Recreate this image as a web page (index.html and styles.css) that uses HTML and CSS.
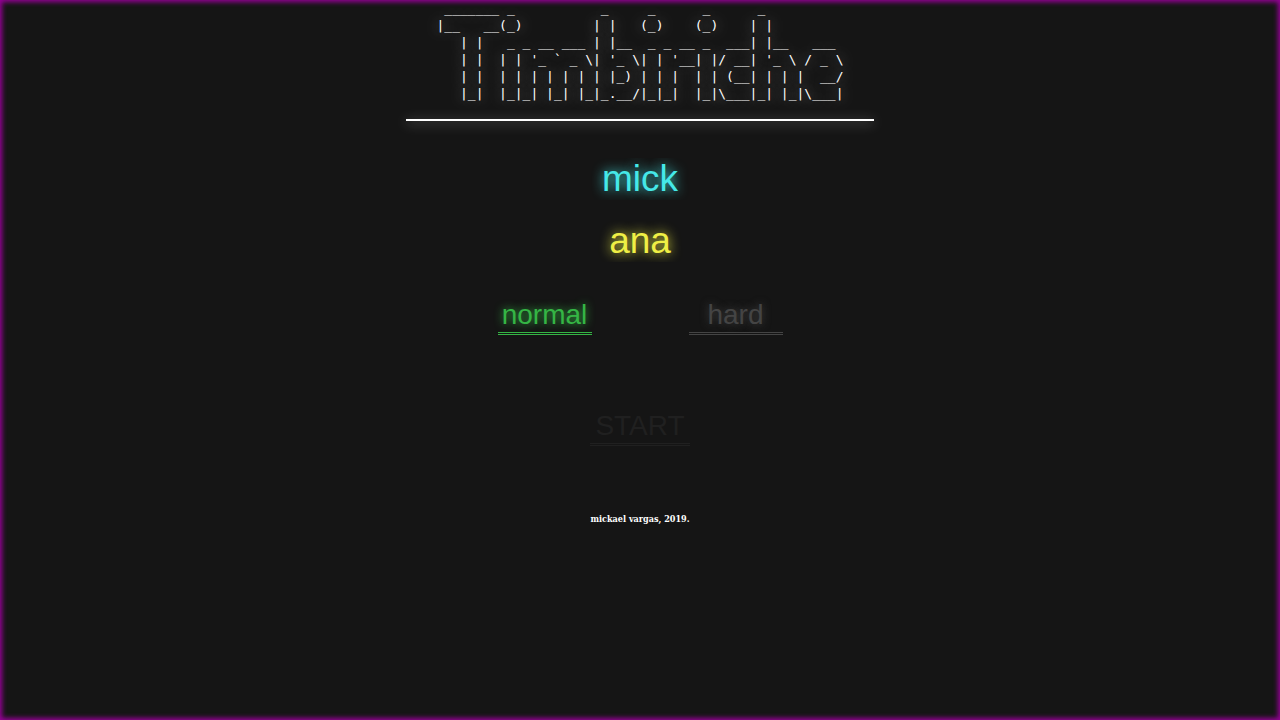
FILE: index.html
```
<!DOCTYPE html>
<html lang="en">
<head>
  <meta charset="utf-8" />
  <meta name="viewport" content="width=device-width, initial-scale=1" />
  <title>Timbiriche</title>
  <link rel="stylesheet" href="styles.css">
</head>
<body>
<div class="container">
  <pre class="logo" role="img" aria-label="Timbiriche">
  _______ _           _     _      _      _           
 |__   __(_)         | |   (_)    (_)    | |          
    | |   _ _ __ ___ | |__  _ _ __ _  ___| |__   ___  
    | |  | | '_ ` _ \| '_ \| | '__| |/ __| '_ \ / _ \ 
    | |  | | | | | | | |_) | | |  | | (__| | | |  __/ 
    |_|  |_|_| |_| |_|_.__/|_|_|  |_|\___|_| |_|\___| </pre>
  <hr class="line">
  <form class="menu">
    <input class="player player1" type="text" value="mick" aria-label="player 1">
    <input class="player player2" type="text" value="ana" aria-label="player 2">
    <div class="modes">
      <button class="mode selected" type="button">normal</button>
      <button class="mode" type="button">hard</button>
    </div>
    <button class="start" type="button">START</button>
  </form>
  <footer class="footer">mickael vargas, 2019.</footer>
</div>
</body>
</html>
```
FILE: styles.css
```
* {
  margin: 0;
  padding: 0;
  box-sizing: border-box;
}
:root {
  --back-color: #151515;
  --blue-color: #45e8e8;
  --yellow-color: #efef45;
  --green-color: #35b545;
  --grey-color: #444;
  --dark-color: #202020;
}
body {
  min-height: 100vh;
  background-color: var(--back-color);
  box-shadow: inset 0 0 5px 2px #909;
  color: white;
  font-family: "Liberation Sans", Arial, sans-serif;
}
.container {
  display: flex;
  flex-direction: column;
  align-items: center;
}
.logo {
  font-family: "DejaVu Sans Mono", monospace;
  font-size: 13px;
  line-height: 17px;
  text-shadow: 0 0 14px #bbb;
}
.line {
  width: 468px;
  max-width: 100%;
  height: 2px;
  margin-top: 17px;
  border: none;
  background: white;
  box-shadow: 0 2px 12px #888;
}
.menu {
  display: flex;
  flex-direction: column;
  align-items: center;
  margin-top: 37px;
}
input, button {
  border: none;
  background: none;
  font-family: inherit;
  text-align: center;
}
.player {
  width: 300px;
  height: 42px;
  margin-bottom: 20px;
  font-size: 37px;
}
.player1 {
  color: var(--blue-color);
  text-shadow: 0 0 12px var(--blue-color);
}
.player2 {
  color: var(--yellow-color);
  text-shadow: 0 0 12px var(--yellow-color);
}
.modes {
  display: flex;
  gap: 97px;
  margin-top: 18px;
}
.mode, .start {
  padding-bottom: 2px;
  font-size: 28px;
  line-height: 30px;
}
.mode {
  width: 94px;
  color: var(--grey-color);
  border-bottom: 3px double var(--grey-color);
  text-shadow: 0 0 8px var(--grey-color);
}
.mode.selected {
  color: var(--green-color);
  border-bottom-color: var(--green-color);
  text-shadow: 0 0 8px var(--green-color);
}
.start {
  width: 100px;
  margin-top: 76px;
  color: var(--dark-color);
  border-bottom: 3px double var(--dark-color);
}
.footer {
  margin-top: 66px;
  font: bold 9px/14px "DejaVu Serif Condensed", "DejaVu Serif", serif;
}
```
